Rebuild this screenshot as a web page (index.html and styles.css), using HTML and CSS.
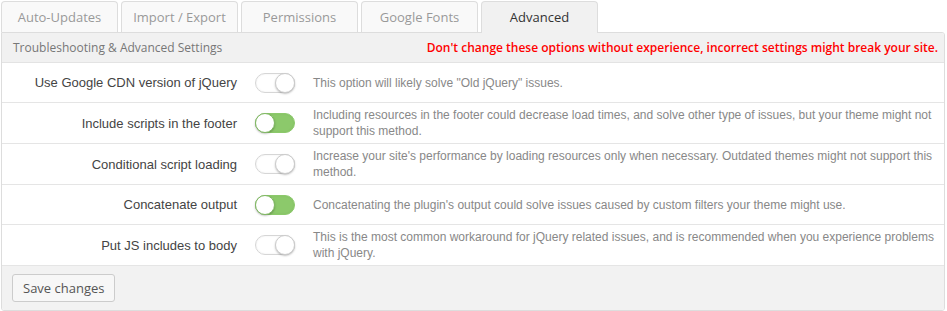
FILE: index.html
```html
<!DOCTYPE html>
<html lang="en">
<head>
  <meta charset="UTF-8">
  <title>Advanced Settings</title>
  <link rel="stylesheet" href="styles.css">
</head>
<body>
  <div class="tabs">
    <a class="tab">Auto-Updates</a>
    <a class="tab">Import / Export</a>
    <a class="tab">Permissions</a>
    <a class="tab">Google Fonts</a>
    <a class="tab active">Advanced</a>
  </div>

  <div class="panel">
    <div class="panel-head">
      <span>Troubleshooting &amp; Advanced Settings</span>
      <span class="warning">Don't change these options without experience, incorrect settings might break your site.</span>
    </div>

    <div class="row">
      <label>Use Google CDN version of jQuery</label>
      <span class="switch"></span>
      <p>This option will likely solve "Old jQuery" issues.</p>
    </div>
    <div class="row">
      <label>Include scripts in the footer</label>
      <span class="switch on"></span>
      <p>Including resources in the footer could decrease load times, and solve other type of issues, but your theme might not support this method.</p>
    </div>
    <div class="row">
      <label>Conditional script loading</label>
      <span class="switch"></span>
      <p>Increase your site's performance by loading resources only when necessary. Outdated themes might not support this method.</p>
    </div>
    <div class="row">
      <label>Concatenate output</label>
      <span class="switch on"></span>
      <p>Concatenating the plugin's output could solve issues caused by custom filters your theme might use.</p>
    </div>
    <div class="row">
      <label>Put JS includes to body</label>
      <span class="switch"></span>
      <p>This is the most common workaround for jQuery related issues, and is recommended when you experience problems with jQuery.</p>
    </div>

    <div class="panel-foot">
      <button type="button">Save changes</button>
    </div>
  </div>
</body>
</html>
```

FILE: styles.css
```css
body {
  margin: 0;
  padding: 1px 2px 0 1px;
  background: #fff;
  font-family: "Liberation Sans", Arial, sans-serif;
}
.tabs {
  display: flex;
  gap: 3px;
  height: 31px;
}
.tab {
  width: 117px;
  height: 31px;
  box-sizing: border-box;
  border: 1px solid #ddd;
  border-bottom: none;
  border-radius: 4px 4px 0 0;
  background: #f9f9f9;
  color: #999;
  font-family: "Open Sans", sans-serif;
  font-size: 13px;
  line-height: 30px;
  text-align: center;
}
.tab.active {
  background: #f1f1f1;
  color: #333;
  height: 32px;
  position: relative;
  z-index: 1;
}
.panel {
  border: 1px solid #ddd;
  border-radius: 0 3px 3px 3px;
  overflow: hidden;
}
.panel-head {
  display: flex;
  justify-content: space-between;
  align-items: center;
  height: 29px;
  padding: 0 6px 0 11px;
  background: #f1f1f1;
  border-bottom: 1px solid #e3e3e3;
  color: #777;
  font-family: "Open Sans", sans-serif;
  font-size: 12px;
}
.warning {
  color: #f00;
  font-weight: 600;
}
.row {
  display: grid;
  grid-template-columns: 235px 76px 1fr;
  align-items: center;
  min-height: 39px;
  border-bottom: 1px solid #e5e5e5;
  background: #fff;
}
.row label {
  text-align: right;
  font-size: 13px;
  color: #444;
}
.row p {
  margin: 0;
  padding: 4px 10px 4px 0;
  font-size: 12px;
  line-height: 16px;
  color: #888;
}
.switch {
  position: relative;
  justify-self: start;
  margin-left: 18px;
  width: 40px;
  height: 20px;
  box-sizing: border-box;
  border: 1px solid #d6d6d6;
  border-radius: 10px;
  background: #fff;
  box-shadow: inset 0 0 2px rgba(0, 0, 0, 0.08);
}
.switch::after {
  content: "";
  position: absolute;
  top: -1px;
  right: -1px;
  width: 20px;
  height: 20px;
  box-sizing: border-box;
  border-radius: 50%;
  background: #fff;
  border: 1px solid #ccc;
  box-shadow: 0 1px 2px rgba(0, 0, 0, 0.25);
}
.switch.on {
  background: #8cc96b;
  border-color: #8cc96b;
}
.switch.on::after {
  right: auto;
  left: -1px;
  border-color: #7fb862;
}
.panel-foot {
  background: #f2f2f2;
  padding: 8px 10px;
}
.panel-foot button {
  display: block;
  height: 28px;
  padding: 0 10px;
  border: 1px solid #ccc;
  border-radius: 3px;
  background: #f7f7f7;
  color: #555;
  font-family: "Open Sans", sans-serif;
  font-size: 13px;
}
```
